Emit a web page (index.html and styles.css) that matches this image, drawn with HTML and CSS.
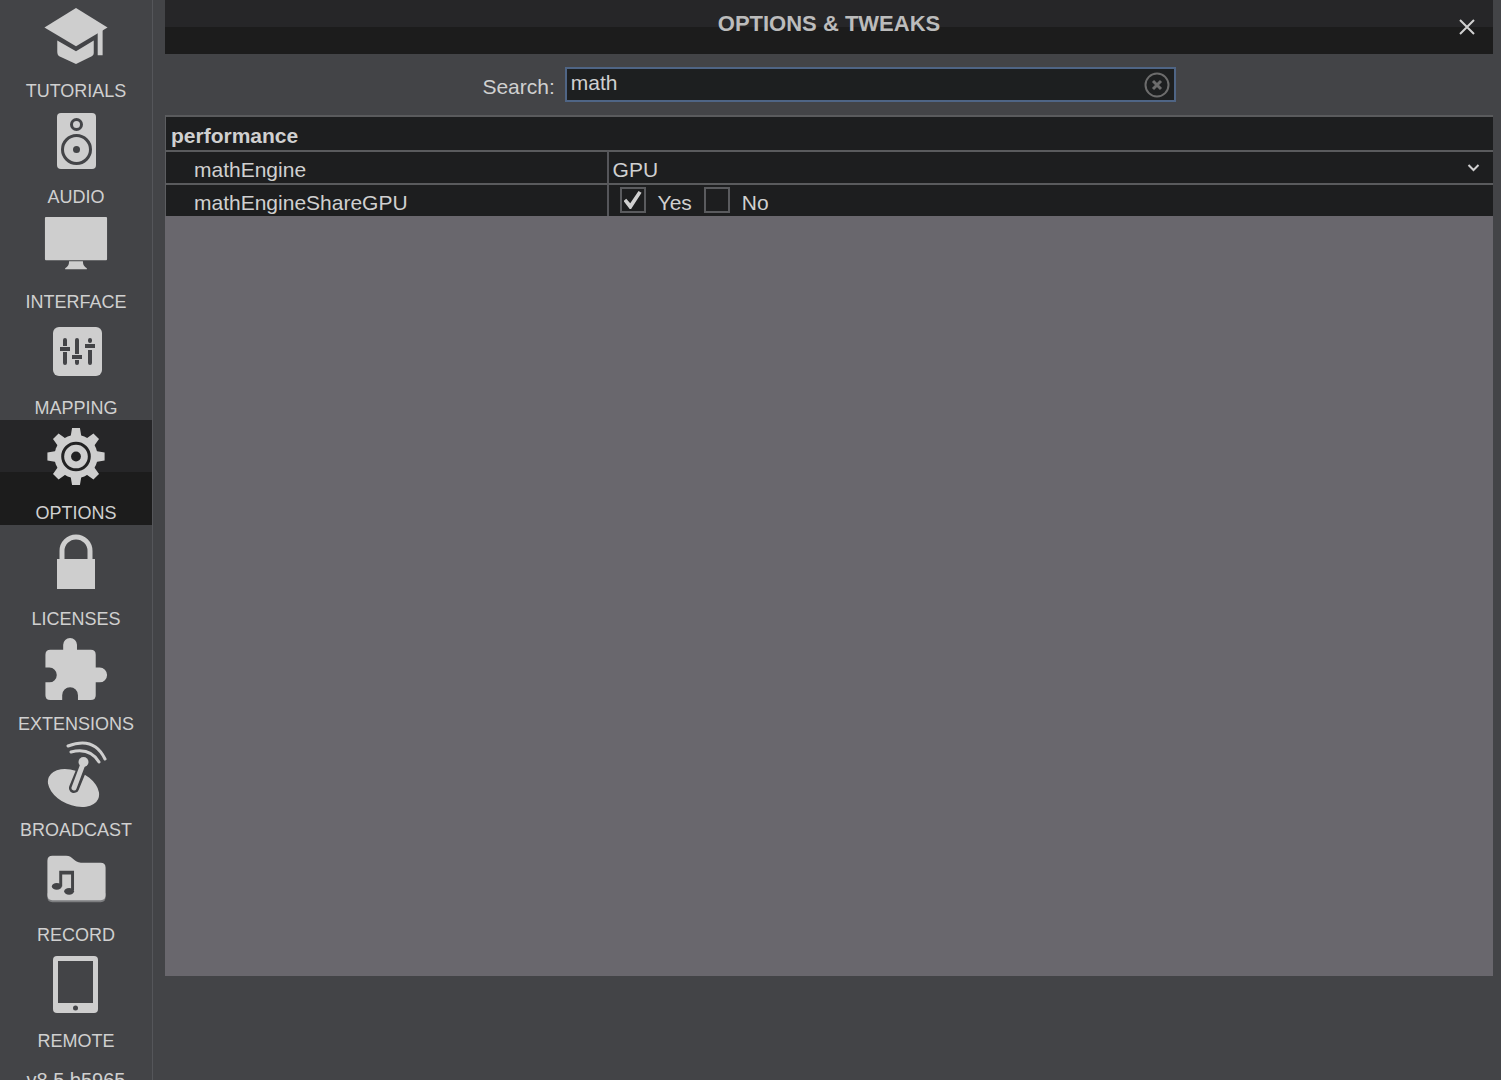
FILE: index.html
```html
<!DOCTYPE html>
<html lang="en">

<head>
    <meta charset="UTF-8">
    <meta name="viewport" content="width=device-width, initial-scale=1.0">
    <title>Options &amp; Tweaks</title>
    <link rel="stylesheet" href="styles.css">
</head>

<body>
    <!-- Sidebar -->
    <aside class="sidebar">
        <nav class="menu">
            <a href="#tutorials" class="menu-item">
                <svg class="icon" viewBox="0 0 72 72">
                    <path d="M36 8 68 28 36 47 4 28Z" />
                    <path d="M17 41 36 52 54 41V54Q54 56 52 57L36 65 19 57Q17 56 17 52Z" />
                    <path d="M58 32 63 29V56H58Z" />
                </svg>
                <span>TUTORIALS</span>
            </a>
            <a href="#audio" class="menu-item">
                <svg class="icon" viewBox="0 0 72 72">
                    <rect x="17" y="8" width="39" height="56" rx="4" />
                    <circle class="cut-line" cx="36.500" cy="19.500" r="5" stroke-width="3" />
                    <circle class="cut-line" cx="36.500" cy="44.500" r="14" stroke-width="3" />
                    <circle class="cut" cx="36.500" cy="44.500" r="3.500" />
                </svg>
                <span>AUDIO</span>
            </a>
            <a href="#interface" class="menu-item">
                <svg class="icon" viewBox="0 0 72 72">
                    <rect x="4.500" y="6" width="63" height="44" rx="1" />
                    <path d="M29 51H43Q43 56 47 58V59H25V58Q29 56 29 51Z" />
                </svg>
                <span>INTERFACE</span>
            </a>
            <a href="#mapping" class="menu-item">
                <svg class="icon" viewBox="0 0 72 72">
                    <rect x="13" y="11" width="49" height="49" rx="6" />
                    <g class="cut-line" stroke-width="4">
                        <path stroke-linecap="round" d="M25 24V28M25 40V47M37 24V35M37 46V47M50 24V25M50 37V47" />
                        <path d="M25 28V30M25 36V40M37 34V38M37 44V46M50 34V38" />
                        <path d="M20 33H30M32 41H42M45 30H55" />
                    </g>
                </svg>
                <span>MAPPING</span>
            </a>
            <a href="#options" class="menu-item active" aria-current="page">
                <svg class="icon" viewBox="0 0 72 72">
                    <defs>
                        <path id="teeth" d="M30 18 32 6H40L42 18ZM30 52 32 64H40L42 52Z" />
                    </defs>
                    <use href="#teeth" />
                    <use href="#teeth" transform="rotate(45 36 35)" />
                    <use href="#teeth" transform="rotate(90 36 35)" />
                    <use href="#teeth" transform="rotate(135 36 35)" />
                    <circle cx="36" cy="35" r="22" />
                    <circle class="cut-line" cx="36" cy="35" r="13.500" stroke-width="3" />
                    <circle class="cut" cx="36" cy="35" r="5" />
                </svg>
                <span>OPTIONS</span>
            </a>
            <a href="#licenses" class="menu-item">
                <svg class="icon" viewBox="0 0 72 72">
                    <path class="line" stroke-width="5" d="M22 34V24A14 14 0 0 1 50 24V34" />
                    <rect x="17" y="32" width="38" height="30" />
                </svg>
                <span>LICENSES</span>
            </a>
            <a href="#extensions" class="menu-item">
                <svg class="icon" viewBox="0 0 72 72">
                    <path d="M10 17H23V12A7 7 0 0 1 37 12V17H51Q56 17 56 22V35H60A7 7 0 0 1 60 50H56V63Q56 68 51 68H38V63A7 7 0 0 0 22 63V68H10Q5 68 5 63V50H9A7 7 0 0 0 9 35H5V22Q5 17 10 17Z" />
                </svg>
                <span>EXTENSIONS</span>
            </a>
            <a href="#broadcast" class="menu-item">
                <svg class="icon" viewBox="0 0 72 72">
                    <ellipse cx="33.500" cy="50" rx="27" ry="17" transform="rotate(24 33.500 50)" />
                    <path class="cut-line" stroke-width="10" stroke-linecap="round" d="M34 50 43 28" />
                    <path class="line" stroke-width="5" stroke-linecap="round" d="M34 50 43 26" />
                    <circle cx="43.500" cy="24" r="5" />
                    <path class="line" stroke-width="3" stroke-linecap="round" d="M31 14Q50 9 59 24M28 8Q54 -2 65 21" />
                </svg>
                <span>BROADCAST</span>
            </a>
            <a href="#record" class="menu-item">
                <svg class="icon" viewBox="0 0 72 72">
                    <path class="shade" d="M7 50H66V54Q66 59 61 59H12Q7 59 7 54Z" />
                    <path d="M12 12H26C33 12 34 19 41 19H61Q66 19 66 24V52Q66 57 61 57H12Q7 57 7 52V17Q7 12 12 12Z" />
                    <path class="cut" d="M19 27H34V47H31V31H22V43H19Z" />
                    <ellipse class="cut" cx="16.500" cy="43" rx="5" ry="3.500" />
                    <ellipse class="cut" cx="29" cy="48" rx="5" ry="3.500" />
                </svg>
                <span>RECORD</span>
            </a>
            <a href="#remote" class="menu-item">
                <svg class="icon" viewBox="0 0 72 72">
                    <rect x="13" y="7" width="45" height="57" rx="4" />
                    <rect class="cut" x="18" y="12" width="35" height="42" />
                    <circle class="cut" cx="35.500" cy="59" r="2.500" />
                </svg>
                <span>REMOTE</span>
            </a>
        </nav>
        <p class="version">v8.5 b5965</p>
    </aside>

    <!-- Options page -->
    <main class="content">
        <header class="title-bar">
            <h1>OPTIONS &amp; TWEAKS</h1>
            <button type="button" class="close" aria-label="Close">
                <svg viewBox="0 0 16 16">
                    <path d="M1 1 15 15M15 1 1 15" />
                </svg>
            </button>
        </header>

        <form class="search">
            <label for="search">Search:</label>
            <div class="search-box">
                <input type="text" id="search" value="math">
                <button type="button" class="clear" aria-label="Clear search">
                    <svg viewBox="0 0 26 26">
                        <circle cx="13" cy="13" r="11.500" stroke-width="2" />
                        <path d="M9 9 17 17M17 9 9 17" stroke-width="3" />
                    </svg>
                </button>
            </div>
        </form>

        <div class="panel">
            <table class="options">
                <colgroup>
                    <col class="name-col">
                    <col>
                </colgroup>
                <thead>
                    <tr>
                        <th colspan="2">performance</th>
                    </tr>
                </thead>
                <tbody>
                    <tr>
                        <td class="name"><label for="math-engine">mathEngine</label></td>
                        <td class="value">
                            <div class="select-box">
                                <select id="math-engine">
                                    <option>GPU</option>
                                </select>
                                <svg class="chevron" viewBox="0 0 12 8">
                                    <path d="M1 1 6 6 11 1" />
                                </svg>
                            </div>
                        </td>
                    </tr>
                    <tr>
                        <td class="name">mathEngineShareGPU</td>
                        <td class="value">
                            <div class="choices">
                                <input type="checkbox" id="share-yes" checked>
                                <label for="share-yes">Yes</label>
                                <input type="checkbox" id="share-no">
                                <label for="share-no">No</label>
                            </div>
                        </td>
                    </tr>
                </tbody>
            </table>
        </div>
    </main>
</body>

</html>
```
FILE: styles.css
```css
/* General Styles */
* {
    box-sizing: border-box;
}

body {
    display: flex;
    height: 100vh;
    margin: 0;
    overflow: hidden;
    background: #434447;
    color: #d0d0d0;
    font-family: "Liberation Sans", Arial, sans-serif;
    font-size: 21px;
}

button,
input,
select {
    margin: 0;
    padding: 0;
    border: none;
    background: none;
    color: inherit;
    font: inherit;
    outline: none;
}

button {
    cursor: pointer;
}

/* Sidebar */
.sidebar {
    flex: none;
    width: 153px;
    overflow: hidden;
    border-right: 1px solid #55565a;
}

.menu {
    display: grid;
    grid-template-rows: repeat(5, 105px 106px);
    margin-top: -2px;
}

.menu-item {
    display: flex;
    flex-direction: column;
    align-items: center;
    gap: 8px;
    padding-top: 2px;
    color: #d0d0d0;
    font-size: 18px;
    line-height: 24px;
    text-decoration: none;
}

.menu-item.active {
    background: linear-gradient(#262628 50%, #1c1c1c 50%);
}

.version {
    margin: 15px 0 0;
    font-size: 20px;
    line-height: 24px;
    text-align: center;
}

/* Icons */
.icon {
    width: 72px;
    height: 72px;
    fill: #cecece;
}

.icon .line {
    fill: none;
    stroke: #cecece;
}

.icon .cut {
    fill: #434447;
}

.icon .cut-line {
    fill: none;
    stroke: #434447;
}

.icon .shade {
    fill: #7d7e80;
}

.active .cut {
    fill: #222223;
}

.active .cut-line {
    stroke: #222223;
}

/* Content */
.content {
    flex: 1;
    display: flex;
    flex-direction: column;
    padding: 0 8px 104px 12px;
}

.title-bar {
    display: grid;
    grid-template-columns: 1fr auto 1fr;
    height: 54px;
    padding: 0 18px;
    background: linear-gradient(#262628 50%, #1c1c1c 50%);
}

.title-bar h1 {
    grid-column: 2;
    margin: 0;
    color: #bcbcbc;
    font-size: 22px;
    line-height: 48px;
}

.close {
    justify-self: end;
    align-self: center;
    display: flex;
}

.close svg {
    width: 16px;
    height: 16px;
    stroke: #d0d0d0;
    stroke-width: 2;
}

/* Search */
.search {
    display: flex;
    justify-content: center;
    gap: 10px;
    height: 61px;
    padding-top: 13px;
    line-height: 40px;
}

.search-box {
    position: relative;
    width: 46%;
    height: 35px;
}

.search-box input {
    display: block;
    width: 100%;
    height: 35px;
    padding: 0 40px 3px 4px;
    border: 2px solid #4f6585;
    background: #1d1f20;
}

.clear {
    position: absolute;
    top: 5px;
    right: 6px;
    display: flex;
}

.clear svg {
    width: 26px;
    height: 26px;
    fill: none;
    stroke: #6c6c6c;
}

/* Options Table */
.panel {
    flex: 1;
    background: #69676d;
}

.options {
    width: 100%;
    table-layout: fixed;
    border-collapse: separate;
    border-spacing: 0;
    border-left: 1px solid #5c5d60;
    background: #1d1e1f;
    line-height: 26px;
}

.name-col {
    width: 33.2%;
}

.options th,
.options td {
    height: 33px;
    padding: 5px 0 0 5px;
    border-top: 2px solid #5a5b5d;
    text-align: left;
    vertical-align: top;
}

.options th {
    height: 35px;
    padding-top: 6px;
}

.options .name {
    padding-left: 28px;
}

.options .value {
    border-left: 2px solid #55565a;
    padding: 2px 0 0 4px;
}

.select-box {
    position: relative;
}

.select-box select {
    display: block;
    width: 100%;
    height: 29px;
    padding-top: 3px;
    appearance: none;
}

.chevron {
    position: absolute;
    top: 10px;
    right: 13px;
    width: 13px;
    height: 8px;
    fill: none;
    stroke: #d0d0d0;
    stroke-width: 2;
    pointer-events: none;
}

.choices {
    display: flex;
    height: 29px;
    padding-left: 7px;
}

.choices input {
    appearance: none;
    display: grid;
    place-items: center;
    width: 26px;
    height: 26px;
    border: 2px solid #5a5b5e;
}

.choices label {
    margin: 0 12px;
    padding-top: 3px;
}

/* Tick mark */
.choices input:checked::before {
    content: "";
    width: 18px;
    height: 18px;
    background: #d0d0d0;
    clip-path: polygon(0 55%, 15% 43%, 37% 68%, 83% 0, 100% 10%, 42% 100%, 34% 100%);
}
```
